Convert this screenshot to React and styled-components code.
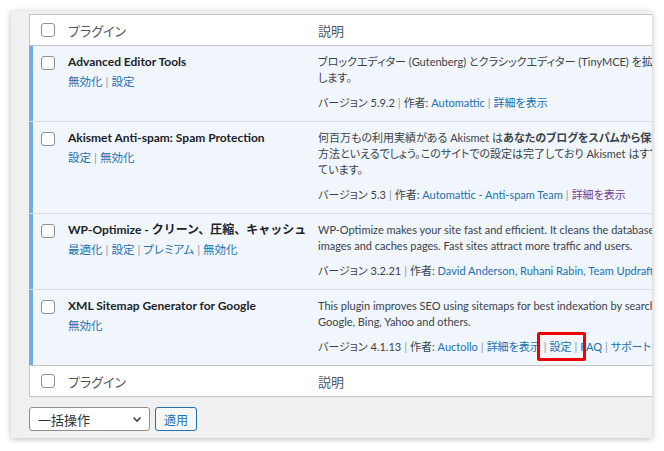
import React from 'react';
import styled, { createGlobalStyle } from 'styled-components';

const GlobalStyle = createGlobalStyle`
  html, body {
    margin: 0;
    padding: 0;
    background: #ffffff;
  }
  body {
    font-family: Lato, "Noto Sans CJK JP", sans-serif;
    font-feature-settings: "palt";
    color: #3c434a;
  }
`

const Page = styled.div`
  width: 664px;
  height: 451px;
  padding: 11px 0 0 11px;
  box-sizing: border-box;
`

const Panel = styled.div`
  width: 641px;
  height: 427px;
  background: #f0f0f1;
  box-shadow: 0 1px 6px rgba(0, 0, 0, 0.28);
  overflow: hidden;
  padding: 3px 0 0 18px;
  box-sizing: border-box;
`

const Table = styled.div`
  width: 780px;
  background: #ffffff;
  border-top: 1px solid #c3c4c7;
  border-bottom: 1px solid #c3c4c7;
`

const HeadRow = styled.div`
  display: grid;
  grid-template-columns: 39px 250px 1fr;
  align-items: center;
  height: 30px;
  box-shadow: inset 1px 0 0 #c3c4c7;
  border-${p => (p.$foot ? 'top' : 'bottom')}: 1px solid #c3c4c7;
  font-size: 13px;
  color: #50575e;
`

const PluginRow = styled.div`
  display: grid;
  grid-template-columns: 39px 250px 1fr;
  background: #f0f6fc;
  box-shadow: inset 4px 0 0 #72aee6;
  border-bottom: ${p => (p.$last ? 'none' : '1px solid #dcdcde')};
  padding: 8px 0 10px;
  font-size: 11.5px;
  line-height: 16px;
`

const CheckCell = styled.div`
  padding-left: 12px;
  display: flex;
  align-items: ${p => (p.$top ? 'flex-start' : 'center')};
  padding-top: ${p => (p.$top ? '2px' : '0')};
`

const Check = styled.span`
  display: block;
  width: 12px;
  height: 12px;
  border: 1px solid #8c8f94;
  border-radius: 3px;
  background: #ffffff;
`

const Name = styled.div`
  font-size: 12px;
  font-weight: 700;
  font-feature-settings: normal;
  color: #1d2327;
  white-space: nowrap;
`

const Actions = styled.div`
  margin-top: 4px;
  color: #2271b1;
`

const Link = styled.span`
  color: ${p => (p.$visited ? '#7e3c91' : '#2271b1')};
`

const Marked = styled.span`
  position: relative;

  &::after {
    content: '';
    position: absolute;
    left: -13px;
    right: -14px;
    top: 50%;
    height: 29px;
    margin-top: -15px;
    box-sizing: border-box;
    border: 3px solid #f00000;
    border-radius: 2px;
  }
`

const Sep = styled.span`
  color: #8c96a0;
  margin: 0 3px;
`

const Desc = styled.div`
  font-size: 11px;
  white-space: nowrap;
  color: #3c434a;
`

const Version = styled.div`
  margin-top: 9px;
  font-size: 11px;
  white-space: nowrap;
  color: #3c434a;
`

const Footer = styled.div`
  display: flex;
  gap: 5px;
  margin-top: 10px;
`

const Select = styled.div`
  width: 121px;
  height: 24px;
  box-sizing: border-box;
  border: 1px solid #8c8f94;
  border-radius: 3px;
  background: #ffffff;
  display: flex;
  align-items: center;
  justify-content: space-between;
  padding: 0 7px 0 8px;
  font-size: 13px;
  color: #2c3338;
`

const ApplyButton = styled.div`
  height: 24px;
  box-sizing: border-box;
  border: 1px solid #2271b1;
  border-radius: 3px;
  background: #f6f7f7;
  color: #2271b1;
  font-size: 12px;
  display: flex;
  align-items: center;
  padding: 0 8px;
`

const Pipe = () => <Sep>|</Sep>

const plugins = [
  {
    name: 'Advanced Editor Tools',
    actions: ['無効化', '設定'],
    desc: ['ブロックエディター (Gutenberg) とクラシックエディター (TinyMCE) を拡張し、強化', 'します。'],
    version: '5.9.2',
    authors: 'Automattic',
    extra: [],
  },
  {
    name: 'Akismet Anti-spam: Spam Protection',
    actions: ['設定', '無効化'],
    desc: [
      <>何百万もの利用実績がある Akismet は<b>あなたのブログをスパムから保護する最良の</b></>,
      '方法といえるでしょう。このサイトでの設定は完了しており Akismet はすでにサイトを保護し',
      'ています。',
    ],
    version: '5.3',
    authors: 'Automattic - Anti-spam Team',
    extra: [],
    visited: true,
  },
  {
    name: 'WP-Optimize - クリーン、圧縮、キャッシュ',
    actions: ['最適化', '設定', 'プレミアム', '無効化'],
    desc: [
      'WP-Optimize makes your site fast and efficient. It cleans the database, compresses',
      'images and caches pages. Fast sites attract more traffic and users.',
    ],
    version: '3.2.21',
    authors: 'David Anderson, Ruhani Rabin, Team Updraft',
    extra: [],
  },
  {
    name: 'XML Sitemap Generator for Google',
    actions: ['無効化'],
    desc: [
      'This plugin improves SEO using sitemaps for best indexation by search engines like',
      'Google, Bing, Yahoo and others.',
    ],
    version: '4.1.13',
    authors: 'Auctollo',
    extra: ['設定', 'FAQ', 'サポート', 'レビュー'],
    marked: '設定',
  },
]

function Chevron() {
  return (
    <svg width="10" height="10" viewBox="0 0 10 10">
      <path d="M1.5 3.5 L5 7 L8.5 3.5" fill="none" stroke="#3c434a" strokeWidth="1.6" />
    </svg>
  )
}

export default function App() {
  return (
    <Page>
      <GlobalStyle />
      <Panel>
        <Table>
          <HeadRow>
            <CheckCell><Check /></CheckCell>
            <div>プラグイン</div>
            <div>説明</div>
          </HeadRow>
          {plugins.map((p, i) => (
            <PluginRow key={p.name} $last={i === plugins.length - 1}>
              <CheckCell $top><Check /></CheckCell>
              <div>
                <Name>{p.name}</Name>
                <Actions>
                  {p.actions.map((a, j) => (
                    <React.Fragment key={a}>
                      {j > 0 && <Pipe />}
                      <Link>{a}</Link>
                    </React.Fragment>
                  ))}
                </Actions>
              </div>
              <div>
                {p.desc.map((line, j) => (
                  <Desc key={j}>{line}</Desc>
                ))}
                <Version>
                  バージョン {p.version}<Pipe />作者: <Link>{p.authors}</Link><Pipe />
                  <Link $visited={p.visited}>詳細を表示</Link>
                  {p.extra.map(e => (
                    <React.Fragment key={e}>
                      <Pipe />
                      {e === p.marked ? (
                        <Marked><Link>{e}</Link></Marked>
                      ) : (
                        <Link>{e}</Link>
                      )}
                    </React.Fragment>
                  ))}
                </Version>
              </div>
            </PluginRow>
          ))}
          <HeadRow $foot>
            <CheckCell><Check /></CheckCell>
            <div>プラグイン</div>
            <div>説明</div>
          </HeadRow>
        </Table>
        <Footer>
          <Select>
            <span>一括操作</span>
            <Chevron />
          </Select>
          <ApplyButton>適用</ApplyButton>
        </Footer>
      </Panel>
    </Page>
  )
}
